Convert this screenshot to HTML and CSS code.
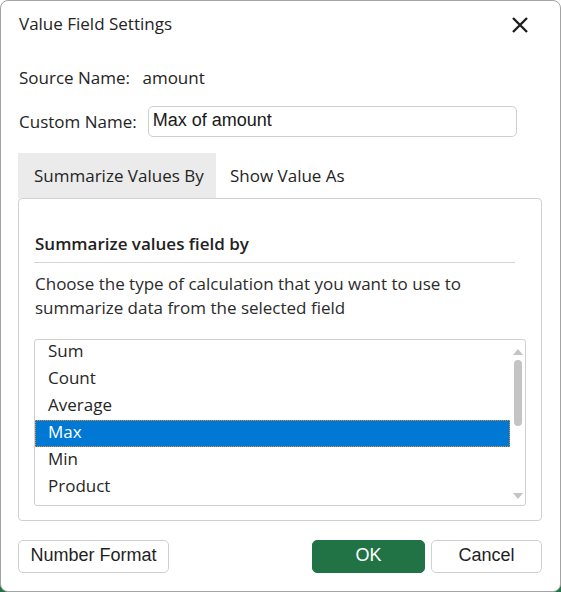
FILE: index.html
```html
<!DOCTYPE html>
<html lang="en">
<head>
    <meta charset="UTF-8">
    <meta name="viewport" content="width=device-width, initial-scale=1.0">
    <title>Value Field Settings</title>
    <link rel="stylesheet" href="styles.css">
</head>
<body>
    <div class="dialog">
        <div class="dialog-header">
            <span class="dialog-title">Value Field Settings</span>
            <button class="close-button" type="button" aria-label="Close">
                <svg width="18" height="18" viewBox="0 0 18 18">
                    <path d="M2 2 L16 16 M16 2 L2 16" stroke="#1f1f1f" stroke-width="2.4" fill="none"/>
                </svg>
            </button>
        </div>

        <div class="source-row">
            <span class="label">Source Name:</span>
            <span class="source-value">amount</span>
        </div>

        <div class="custom-row">
            <label class="label" for="customName">Custom Name:</label>
            <input class="input" type="text" id="customName" value="Max of amount">
        </div>

        <div class="tabs">
            <div class="tab is-active">Summarize Values By</div>
            <div class="tab">Show Value As</div>
        </div>

        <div class="panel">
            <h2 class="panel-title">Summarize values field by</h2>
            <p class="panel-text">Choose the type of calculation that you want to use to summarize data from the selected field</p>

            <div class="listbox">
                <ul class="list">
                    <li class="list-item">Sum</li>
                    <li class="list-item">Count</li>
                    <li class="list-item">Average</li>
                    <li class="list-item is-selected">Max</li>
                    <li class="list-item">Min</li>
                    <li class="list-item">Product</li>
                </ul>
                <div class="scrollbar">
                    <span class="arrow-up"></span>
                    <span class="thumb"></span>
                    <span class="arrow-down"></span>
                </div>
            </div>
        </div>

        <div class="footer">
            <button class="button" type="button">Number Format</button>
            <div class="footer-right">
                <button class="button is-primary" type="button">OK</button>
                <button class="button is-cancel" type="button">Cancel</button>
            </div>
        </div>
    </div>
</body>
</html>
```

FILE: styles.css
```css
* {
    margin: 0;
    padding: 0;
    box-sizing: border-box;
}
html {
    background: linear-gradient(#ffffff 50%, #217346 50%);
}
body {
    font-family: "Open Sans", "Noto Sans", sans-serif;
    font-size: 17px;
    color: #242424;
}

.dialog {
    width: 561px;
    height: 592px;
    background-color: #ffffff;
    border: 1px solid #a3a3a3;
    border-radius: 8px;
    padding: 0 18px 0 17px;
}

.dialog-header {
    height: 45px;
    display: flex;
    align-items: center;
    justify-content: space-between;
    padding: 0 13px 0 1px;
}
.dialog-title {
    font-size: 17px;
}
.close-button {
    background: none;
    border: none;
    width: 18px;
    height: 18px;
    display: flex;
    margin-top: 2px;
}

.label {
    display: inline-block;
    padding-left: 1px;
}

.source-row {
    margin-top: 20px;
    line-height: 24px;
}
.source-value {
    margin-left: 8px;
}

.custom-row {
    margin-top: 16px;
    display: flex;
    align-items: center;
    padding-right: 25px;
}
.input {
    flex: 1;
    height: 31px;
    margin-left: 11px;
    border: 1px solid #cfcfcf;
    border-radius: 5px;
    padding: 0 4px 3px;
    font-family: "Liberation Sans", Arial, sans-serif;
    font-size: 18px;
    color: #1a1a1a;
}

.tabs {
    margin-top: 16px;
    display: flex;
    height: 45px;
}
.tab {
    padding: 0 0 0 16px;
    display: flex;
    align-items: center;
    font-size: 17px;
    white-space: nowrap;
}
.tab.is-active {
    background-color: #ebebeb;
    width: 198px;
    margin-right: -2px;
}

.panel {
    height: 323px;
    border: 1px solid #d1d1d1;
    border-radius: 4px;
    padding: 33px 15px 15px 15px;
}
.panel-title {
    font-size: 17px;
    font-weight: 600;
    line-height: 24px;
    padding: 0 0 6px 1px;
    margin-right: 11px;
    border-bottom: 1px solid #d4d4d4;
    color: #222222;
}
.panel-text {
    margin-top: 9px;
    line-height: 24px;
    padding-left: 1px;
    padding-right: 30px;
    color: #2b2b2b;
}

.listbox {
    margin-top: 19px;
    height: 167px;
    border: 1px solid #d1d1d1;
    border-radius: 3px;
    display: flex;
    overflow: hidden;
}
.list {
    list-style: none;
    flex: 1;
    margin-top: -1px;
}
.list-item {
    height: 27px;
    line-height: 24px;
    padding-left: 13px;
    color: #262626;
}
.list-item.is-selected {
    background-color: #0078d4;
    color: #ffffff;
    outline: 1px dotted #e8902e;
    outline-offset: -1px;
}

.scrollbar {
    width: 15px;
    display: flex;
    flex-direction: column;
    align-items: center;
    padding: 9px 0 6px;
}
.arrow-up,
.arrow-down {
    width: 0;
    height: 0;
    border-left: 5px solid transparent;
    border-right: 5px solid transparent;
}
.arrow-up {
    border-bottom: 6px solid #c4c4c4;
}
.arrow-down {
    border-top: 6px solid #c4c4c4;
    margin-top: auto;
}
.thumb {
    width: 8px;
    height: 66px;
    margin-top: 5px;
    border-radius: 4px;
    background-color: #c4c4c4;
}

.footer {
    margin-top: 19px;
    display: flex;
    justify-content: space-between;
}
.footer-right {
    display: flex;
    gap: 6px;
}
.button {
    height: 33px;
    border: 1px solid #d1d1d1;
    border-radius: 5px;
    background-color: #ffffff;
    font-family: "Liberation Sans", Arial, sans-serif;
    font-size: 18px;
    color: #1f1f1f;
    padding: 0 0 2px;
    white-space: nowrap;
    width: 151px;
}
.button.is-primary {
    width: 113px;
    background-color: #217346;
    border-color: #217346;
    color: #ffffff;
}
.button.is-cancel {
    width: 111px;
}
```
